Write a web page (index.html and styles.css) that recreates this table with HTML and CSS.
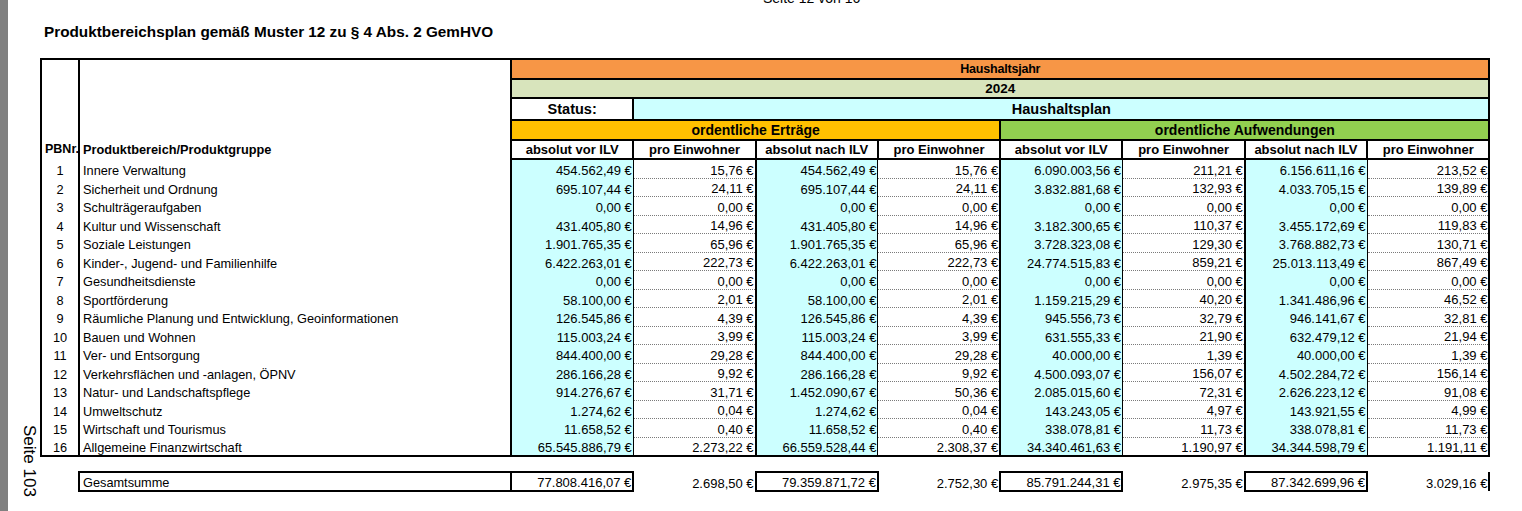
FILE: index.html
```html
<!DOCTYPE html>
<html lang="de">
<head>
<meta charset="utf-8">
<title>Produktbereichsplan</title>
<link rel="stylesheet" href="styles.css">
</head>
<body>
<div class="gutter"></div>
<div class="page">
  <div class="side"><span class="pageno">Seite 103</span></div>
  <div class="content">
    <div class="runhead">Seite 12 von 16</div>
    <h1 class="title">Produktbereichsplan gemäß Muster 12 zu § 4 Abs. 2 GemHVO</h1>
    <table class="plan">
      <colgroup>
        <col class="c-nr"><col class="c-name">
        <col class="c-val"><col class="c-val"><col class="c-val"><col class="c-val">
        <col class="c-val"><col class="c-val"><col class="c-val"><col class="c-val">
      </colgroup>
      <thead>
        <tr class="r-year">
          <td class="h-nr" rowspan="5">PBNr.</td>
          <td class="h-name" rowspan="5">Produktbereich/Produktgruppe</td>
          <td class="h-jahr" colspan="8">Haushaltsjahr</td>
        </tr>
        <tr class="r-2024"><td class="h-2024" colspan="8">2024</td></tr>
        <tr class="r-status">
          <td class="h-status">Status:</td>
          <td class="h-plan" colspan="7">Haushaltsplan</td>
        </tr>
        <tr class="r-group">
          <td class="h-ertrag" colspan="4">ordentliche Erträge</td>
          <td class="h-aufw" colspan="4">ordentliche Aufwendungen</td>
        </tr>
        <tr class="r-cols">
          <td class="h-col">absolut vor ILV</td><td class="h-col">pro Einwohner</td>
          <td class="h-col">absolut nach ILV</td><td class="h-col">pro Einwohner</td>
          <td class="h-col">absolut vor ILV</td><td class="h-col">pro Einwohner</td>
          <td class="h-col">absolut nach ILV</td><td class="h-col">pro Einwohner</td>
        </tr>
      </thead>
      <tbody>
        <tr class="row"><td class="nr">1</td><td class="name">Innere Verwaltung</td><td class="a">454.562,49 €</td><td class="p">15,76 €</td><td class="a">454.562,49 €</td><td class="p">15,76 €</td><td class="a">6.090.003,56 €</td><td class="p">211,21 €</td><td class="a">6.156.611,16 €</td><td class="p">213,52 €</td></tr>
        <tr class="row"><td class="nr">2</td><td class="name">Sicherheit und Ordnung</td><td class="a">695.107,44 €</td><td class="p">24,11 €</td><td class="a">695.107,44 €</td><td class="p">24,11 €</td><td class="a">3.832.881,68 €</td><td class="p">132,93 €</td><td class="a">4.033.705,15 €</td><td class="p">139,89 €</td></tr>
        <tr class="row"><td class="nr">3</td><td class="name">Schulträgeraufgaben</td><td class="a">0,00 €</td><td class="p">0,00 €</td><td class="a">0,00 €</td><td class="p">0,00 €</td><td class="a">0,00 €</td><td class="p">0,00 €</td><td class="a">0,00 €</td><td class="p">0,00 €</td></tr>
        <tr class="row"><td class="nr">4</td><td class="name">Kultur und Wissenschaft</td><td class="a">431.405,80 €</td><td class="p">14,96 €</td><td class="a">431.405,80 €</td><td class="p">14,96 €</td><td class="a">3.182.300,65 €</td><td class="p">110,37 €</td><td class="a">3.455.172,69 €</td><td class="p">119,83 €</td></tr>
        <tr class="row"><td class="nr">5</td><td class="name">Soziale Leistungen</td><td class="a">1.901.765,35 €</td><td class="p">65,96 €</td><td class="a">1.901.765,35 €</td><td class="p">65,96 €</td><td class="a">3.728.323,08 €</td><td class="p">129,30 €</td><td class="a">3.768.882,73 €</td><td class="p">130,71 €</td></tr>
        <tr class="row"><td class="nr">6</td><td class="name">Kinder-, Jugend- und Familienhilfe</td><td class="a">6.422.263,01 €</td><td class="p">222,73 €</td><td class="a">6.422.263,01 €</td><td class="p">222,73 €</td><td class="a">24.774.515,83 €</td><td class="p">859,21 €</td><td class="a">25.013.113,49 €</td><td class="p">867,49 €</td></tr>
        <tr class="row"><td class="nr">7</td><td class="name">Gesundheitsdienste</td><td class="a">0,00 €</td><td class="p">0,00 €</td><td class="a">0,00 €</td><td class="p">0,00 €</td><td class="a">0,00 €</td><td class="p">0,00 €</td><td class="a">0,00 €</td><td class="p">0,00 €</td></tr>
        <tr class="row"><td class="nr">8</td><td class="name">Sportförderung</td><td class="a">58.100,00 €</td><td class="p">2,01 €</td><td class="a">58.100,00 €</td><td class="p">2,01 €</td><td class="a">1.159.215,29 €</td><td class="p">40,20 €</td><td class="a">1.341.486,96 €</td><td class="p">46,52 €</td></tr>
        <tr class="row"><td class="nr">9</td><td class="name">Räumliche Planung und Entwicklung, Geoinformationen</td><td class="a">126.545,86 €</td><td class="p">4,39 €</td><td class="a">126.545,86 €</td><td class="p">4,39 €</td><td class="a">945.556,73 €</td><td class="p">32,79 €</td><td class="a">946.141,67 €</td><td class="p">32,81 €</td></tr>
        <tr class="row"><td class="nr">10</td><td class="name">Bauen und Wohnen</td><td class="a">115.003,24 €</td><td class="p">3,99 €</td><td class="a">115.003,24 €</td><td class="p">3,99 €</td><td class="a">631.555,33 €</td><td class="p">21,90 €</td><td class="a">632.479,12 €</td><td class="p">21,94 €</td></tr>
        <tr class="row"><td class="nr">11</td><td class="name">Ver- und Entsorgung</td><td class="a">844.400,00 €</td><td class="p">29,28 €</td><td class="a">844.400,00 €</td><td class="p">29,28 €</td><td class="a">40.000,00 €</td><td class="p">1,39 €</td><td class="a">40.000,00 €</td><td class="p">1,39 €</td></tr>
        <tr class="row"><td class="nr">12</td><td class="name">Verkehrsflächen und -anlagen, ÖPNV</td><td class="a">286.166,28 €</td><td class="p">9,92 €</td><td class="a">286.166,28 €</td><td class="p">9,92 €</td><td class="a">4.500.093,07 €</td><td class="p">156,07 €</td><td class="a">4.502.284,72 €</td><td class="p">156,14 €</td></tr>
        <tr class="row"><td class="nr">13</td><td class="name">Natur- und Landschaftspflege</td><td class="a">914.276,67 €</td><td class="p">31,71 €</td><td class="a">1.452.090,67 €</td><td class="p">50,36 €</td><td class="a">2.085.015,60 €</td><td class="p">72,31 €</td><td class="a">2.626.223,12 €</td><td class="p">91,08 €</td></tr>
        <tr class="row"><td class="nr">14</td><td class="name">Umweltschutz</td><td class="a">1.274,62 €</td><td class="p">0,04 €</td><td class="a">1.274,62 €</td><td class="p">0,04 €</td><td class="a">143.243,05 €</td><td class="p">4,97 €</td><td class="a">143.921,55 €</td><td class="p">4,99 €</td></tr>
        <tr class="row"><td class="nr">15</td><td class="name">Wirtschaft und Tourismus</td><td class="a">11.658,52 €</td><td class="p">0,40 €</td><td class="a">11.658,52 €</td><td class="p">0,40 €</td><td class="a">338.078,81 €</td><td class="p">11,73 €</td><td class="a">338.078,81 €</td><td class="p">11,73 €</td></tr>
        <tr class="row last"><td class="nr">16</td><td class="name">Allgemeine Finanzwirtschaft</td><td class="a">65.545.886,79 €</td><td class="p">2.273,22 €</td><td class="a">66.559.528,44 €</td><td class="p">2.308,37 €</td><td class="a">34.340.461,63 €</td><td class="p">1.190,97 €</td><td class="a">34.344.598,79 €</td><td class="p">1.191,11 €</td></tr>
        <tr class="spacer"><td colspan="10"></td></tr>
        <tr class="total"><td class="t-nr"></td><td class="t-name">Gesamtsumme</td><td class="t-a">77.808.416,07 €</td><td class="t-p">2.698,50 €</td><td class="t-a">79.359.871,72 €</td><td class="t-p">2.752,30 €</td><td class="t-a">85.791.244,31 €</td><td class="t-p">2.975,35 €</td><td class="t-a">87.342.699,96 €</td><td class="t-p t-end">3.029,16 €</td></tr>
      </tbody>
    </table>
  </div>
</div>
</body>
</html>
```

FILE: styles.css
```css
html, body {
  margin: 0;
  padding: 0;
  background: #ffffff;
}
body {
  display: flex;
  height: 511px;
  overflow: hidden;
  font-family: "Liberation Sans", Arial, sans-serif;
  color: #000;
}
.gutter {
  width: 8px;
  flex: none;
  background: #808080;
}
.page {
  flex: 1;
  display: flex;
  background: #fff;
}
.side {
  width: 32px;
  flex: none;
  display: flex;
  flex-direction: column;
  justify-content: flex-end;
  align-items: flex-start;
  padding-left: 12px;
  padding-bottom: 14px;
  box-sizing: border-box;
}
.pageno {
  writing-mode: vertical-rl;
  font-size: 17px;
  line-height: 18px;
  white-space: nowrap;
}
.content {
  flex: 1;
  display: flex;
  flex-direction: column;
}
.runhead {
  height: 16px;
  margin-top: -10px;
  padding-left: 723px;
  font-size: 14px;
  line-height: 16px;
}
.title {
  margin: 17px 0 0 4px;
  font-size: 15.3px;
  line-height: 17px;
  font-weight: bold;
  height: 35px;
}
.plan {
  border-collapse: collapse;
  table-layout: fixed;
  width: 1449px;
  font-size: 12.75px;
}
.c-nr { width: 38px; }
.c-name { width: 432px; }
.c-val { width: 122.3px; }
.plan td {
  padding: 0 1px;
  white-space: nowrap;
  overflow: hidden;
  line-height: 15px;
}
/* header */
.h-nr {
  border: 2px solid #000;
  border-bottom: none;
  vertical-align: bottom;
  font-weight: bold;
  font-size: 12.5px;
  padding: 0 0 2px 3px !important;
  overflow: visible !important;
}
.h-name {
  border: 2px solid #000;
  border-bottom: none;
  vertical-align: bottom;
  font-weight: bold;
  font-size: 12.75px;
  padding: 0 0 2px 3px !important;
}
.r-year td { height: 18px; }
.r-2024 td { height: 17px; }
.r-status td { height: 20px; }
.r-group td { height: 18px; }
.r-cols td { height: 17px; }
.h-jahr {
  background: #f79646;
  border: 2px solid #000;
  text-align: center;
  font-weight: bold;
  font-size: 12.5px;
  letter-spacing: -0.2px;
}
.h-2024 {
  background: #d8e4bc;
  border: 2px solid #000;
  text-align: center;
  font-weight: bold;
  font-size: 13.5px;
}
.h-status {
  background: #fff;
  border: 2px solid #000;
  text-align: center;
  font-weight: bold;
  font-size: 14.5px;
}
.h-plan {
  background: #ccffff;
  border: 2px solid #000;
  text-align: center;
  font-weight: bold;
  font-size: 14.5px;
}
.h-ertrag {
  background: #ffc000;
  border: 2px solid #000;
  text-align: center;
  font-weight: bold;
  font-size: 14px;
}
.h-aufw {
  background: #92d050;
  border: 2px solid #000;
  text-align: center;
  font-weight: bold;
  font-size: 14px;
}
.h-col {
  border: 2px solid #000;
  text-align: center;
  font-weight: bold;
  font-size: 13px;
}
/* data rows */
.row td {
  height: 17.5px;
  vertical-align: bottom;
}
.nr {
  text-align: center;
  border-left: 2px solid #000;
  border-right: 2px solid #000;
}
.name {
  border-right: 2px solid #000;
  padding-left: 3px !important;
}
.a {
  background: #ccffff;
  text-align: right;
  border-right: 1px solid #000;
  font-size: 13px;
}
.p {
  text-align: right;
  border-bottom: 1px dotted #7a7a7a;
  border-right: 2px solid #000;
  font-size: 13px;
}
.row.last td {
  border-bottom: 2px solid #000;
}
.spacer td {
  height: 14px;
  padding: 0;
  border: none;
}
.total td {
  height: 17px;
  vertical-align: bottom;
  text-align: right;
  font-size: 13px;
}
.total .t-name {
  text-align: left;
  padding-left: 3px;
  border: 2px solid #000;
  font-size: 12.75px;
}
.t-a {
  border: 2px solid #000;
}
.t-end {
  border-right: 2px solid #000;
}
```
